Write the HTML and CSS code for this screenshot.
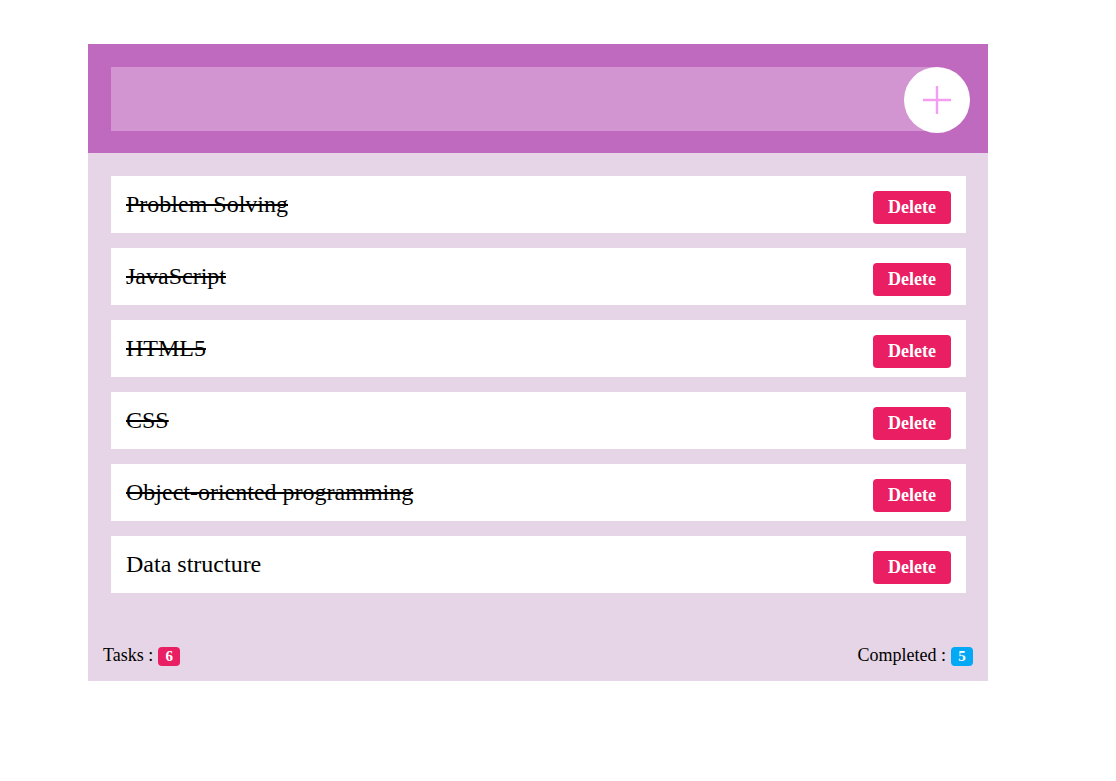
FILE: index.html
```html
<!DOCTYPE html>
<html>
<head>
<meta charset="utf-8">
<link rel="stylesheet" href="styles.css">
</head>
<body>
<div class="app">
  <div class="header">
    <div class="input-row">
      <input class="task-input" type="text">
      <button class="add-btn" aria-label="Add">
        <svg width="28" height="28" viewBox="0 0 28 28"><path d="M14 0v28M0 14h28" stroke="#f49ef2" stroke-width="2.4" fill="none"/></svg>
      </button>
    </div>
  </div>
  <ul class="list">
    <li class="item done"><span class="label">Problem Solving</span><button class="del">Delete</button></li>
    <li class="item done"><span class="label">JavaScript</span><button class="del">Delete</button></li>
    <li class="item done"><span class="label">HTML5</span><button class="del">Delete</button></li>
    <li class="item done"><span class="label">CSS</span><button class="del">Delete</button></li>
    <li class="item done"><span class="label">Object-oriented programming</span><button class="del">Delete</button></li>
    <li class="item"><span class="label">Data structure</span><button class="del">Delete</button></li>
  </ul>
  <div class="footer">
    <div class="stat">Tasks : <span class="badge pink">6</span></div>
    <div class="stat">Completed : <span class="badge blue">5</span></div>
  </div>
</div>
</body>
</html>
```
FILE: styles.css
```css
* { box-sizing: border-box; }
body {
  margin: 0;
  padding: 44px 0 0 88px;
  background: #fff;
  font-family: "Liberation Serif", "Times New Roman", serif;
}
.app {
  width: 900px;
  height: 637px;
  background: #e6d5e6;
  display: flex;
  flex-direction: column;
}
.header {
  background: #bf69bf;
  height: 109px;
  padding: 23px 18px 0 23px;
}
.input-row {
  display: flex;
  align-items: flex-start;
  position: relative;
}
.task-input {
  flex: 1;
  height: 64px;
  border: none;
  background: #d395d1;
  outline: none;
  margin-right: -33px;
}
.add-btn {
  position: relative;
  width: 66px;
  height: 66px;
  border-radius: 50%;
  border: none;
  background: #fff;
  padding: 0;
  display: flex;
  align-items: center;
  justify-content: center;
}
.list {
  list-style: none;
  margin: 0;
  padding: 23px 22px 0 23px;
  display: flex;
  flex-direction: column;
  gap: 15px;
}
.item {
  height: 57px;
  background: #fff;
  display: flex;
  align-items: center;
  justify-content: space-between;
  padding: 0 15px;
}
.label {
  font-size: 24px;
  color: #000;
}
.done .label { text-decoration: line-through; }
.del {
  width: 78px;
  height: 33px;
  border: none;
  border-radius: 4px;
  background: #e91e63;
  color: #fff;
  font-family: "Liberation Serif", "Times New Roman", serif;
  font-weight: bold;
  font-size: 18px;
  padding: 0;
  margin-top: 5px;
}
.footer {
  margin-top: auto;
  display: flex;
  justify-content: space-between;
  align-items: center;
  padding: 0 15px 15px 15px;
}
.stat {
  font-size: 18px;
  color: #000;
  display: flex;
  align-items: center;
  gap: 5px;
}
.badge {
  display: inline-block;
  min-width: 22px;
  height: 19px;
  line-height: 19px;
  border-radius: 4px;
  color: #fff;
  font-weight: bold;
  font-size: 15px;
  text-align: center;
  padding: 0 5px;
  margin-top: 2px;
}
.pink { background: #e91e63; }
.blue { background: #03a9f4; }
```
